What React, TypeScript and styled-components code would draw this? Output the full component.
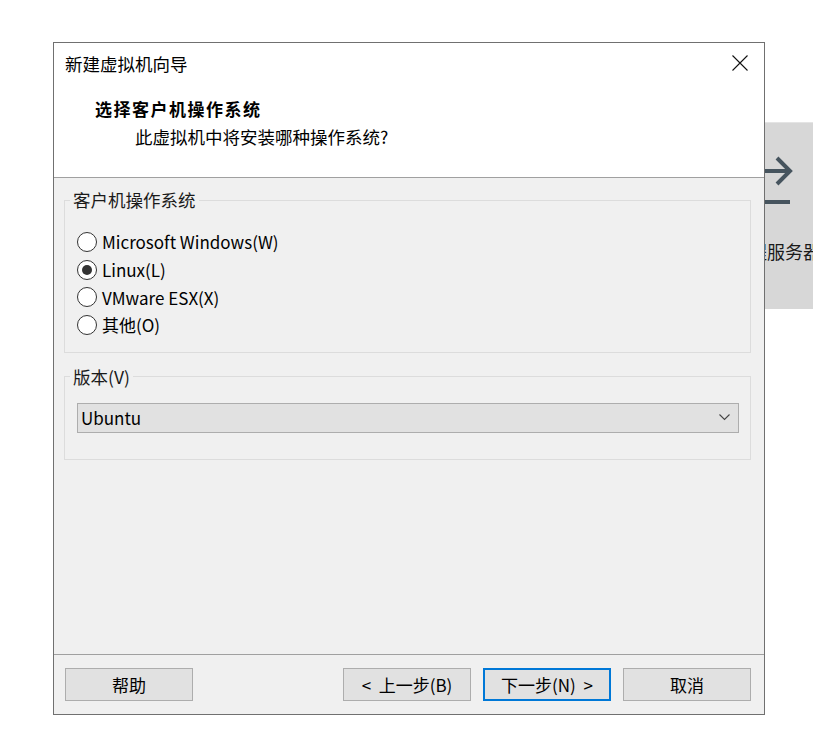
import React from 'react';
import styled, { createGlobalStyle } from 'styled-components';

const GlobalStyle = createGlobalStyle`
	html, body {
		margin: 0;
		padding: 0;
		background: #ffffff;
		overflow: hidden;
	}
	* {
		box-sizing: border-box;
	}
`;

const FONT = `"Noto Sans CJK SC", "Noto Sans", sans-serif`;

const Desktop = styled.div`
	position: relative;
	width: 813px;
	height: 730px;
	background: #ffffff;
	overflow: hidden;
	font-family: ${FONT};
	color: #000;
`;

/* window sitting behind the wizard */
const BackPanel = styled.div`
	position: absolute;
	left: 700px;
	top: 122px;
	width: 113px;
	height: 187px;
	background: #d7d7d7;
	border-top: 1px solid #e4e4e4;
	display: flex;
	flex-direction: column;
	align-items: flex-start;
	padding-left: 47px;
	overflow: hidden;
`;

const BackIcon = styled.svg`
	margin-top: 32px;
	flex-shrink: 0;
`;

const BackText = styled.div`
	margin-top: 32px;
	margin-left: 2px;
	font-size: 18px;
	line-height: 24px;
	white-space: nowrap;
	color: #1a1a1a;
`;

const Dialog = styled.div`
	position: absolute;
	left: 53px;
	top: 42px;
	width: 712px;
	height: 673px;
	border: 1px solid #707070;
	background: #f0f0f0;
	display: flex;
	flex-direction: column;
`;

const Header = styled.div`
	height: 135px;
	background: #ffffff;
	border-bottom: 1px solid #a0a0a0;
	display: flex;
	flex-direction: column;
`;

const TitleBar = styled.div`
	height: 42px;
	display: flex;
	align-items: center;
	justify-content: space-between;
	padding: 0 16px 2px 11px;
	font-size: 17.5px;
`;

const CloseButton = styled.svg`
	display: block;
`;

const Headline = styled.div`
	margin-top: 12px;
	padding-left: 41px;
	font-size: 17px;
	font-weight: 700;
	line-height: 24px;
	letter-spacing: 1.5px;
`;

const SubHeadline = styled.div`
	margin-top: 4px;
	padding-left: 81px;
	font-size: 17.5px;
	line-height: 24px;
`;

const Body = styled.div`
	flex: 1;
	padding: 0 13px 0 10px;
	display: flex;
	flex-direction: column;
`;

const GroupBox = styled.fieldset<{ $top: number; $pad: string }>`
	margin: ${p => p.$top}px 0 0 0;
	padding: ${p => p.$pad};
	border: 1px solid #dcdcdc;
	min-width: 0;
`;

const Legend = styled.legend`
	margin-left: -7px;
	padding: 0 3px;
	font-size: 17.5px;
	line-height: 22px;
	color: #1a1a1a;
`;

const RadioRow = styled.label`
	height: 27.7px;
	display: flex;
	align-items: center;
	gap: 5px;
	font-size: 17px;
`;

const RadioCircle = styled.span<{ $checked?: boolean }>`
	width: 20px;
	height: 20px;
	border-radius: 50%;
	border: 1px solid #333333;
	background: #ffffff;
	display: flex;
	align-items: center;
	justify-content: center;

	&::after {
		content: '';
		width: 10px;
		height: 10px;
		border-radius: 50%;
		background: ${p => (p.$checked ? '#333333' : 'transparent')};
	}
`;

const Select = styled.div`
	height: 30px;
	background: #e1e1e1;
	border: 1px solid #adadad;
	display: flex;
	align-items: center;
	justify-content: space-between;
	padding: 0 8px 0 3px;
	font-size: 17px;
`;

const Footer = styled.div`
	height: 60px;
	border-top: 1px solid #a0a0a0;
	display: flex;
	align-items: flex-start;
	padding: 13px 13px 0 11px;
`;

const Spacer = styled.div`
	flex: 1;
`;

const Button = styled.div<{ $primary?: boolean; $gap?: number }>`
	width: 128px;
	height: 33px;
	margin-left: ${p => p.$gap ?? 0}px;
	background: #e1e1e1;
	border: ${p => (p.$primary ? '2px solid #0078d7' : '1px solid #adadad')};
	display: flex;
	align-items: center;
	justify-content: center;
	font-size: 17px;
	white-space: pre;
`;

const options = [
	{ label: 'Microsoft Windows(W)', checked: false },
	{ label: 'Linux(L)', checked: true },
	{ label: 'VMware ESX(X)', checked: false },
	{ label: '其他(O)', checked: false },
];

const App: React.FC = () => {
	return (
		<Desktop>
			<GlobalStyle />
			<BackPanel>
				<BackIcon width="48" height="52" viewBox="0 0 48 52">
					<path d="M0 16 H42" stroke="#46545e" strokeWidth="4" fill="none" />
					<path d="M30 3 L43 16 L30 29" stroke="#46545e" strokeWidth="4" fill="none" />
					<path d="M0 47 H43" stroke="#46545e" strokeWidth="4" fill="none" />
				</BackIcon>
				<BackText>程服务器</BackText>
			</BackPanel>

			<Dialog>
				<Header>
					<TitleBar>
						<span>新建虚拟机向导</span>
						<CloseButton width="16" height="16" viewBox="0 0 16 16">
							<path d="M0.5 0.5 L15.5 15.5 M15.5 0.5 L0.5 15.5" stroke="#111" strokeWidth="1.1" />
						</CloseButton>
					</TitleBar>
					<Headline>选择客户机操作系统</Headline>
					<SubHeadline>此虚拟机中将安装哪种操作系统?</SubHeadline>
				</Header>

				<Body>
					<GroupBox $top={11} $pad="17px 10px 13px 12px">
						<Legend>客户机操作系统</Legend>
						{options.map(o => (
							<RadioRow key={o.label}>
								<RadioCircle $checked={o.checked} />
								<span>{o.label}</span>
							</RadioRow>
						))}
					</GroupBox>

					<GroupBox $top={13} $pad="15px 11px 26px 12px">
						<Legend>版本(V)</Legend>
						<Select>
							<span>Ubuntu</span>
							<svg width="11" height="7" viewBox="0 0 11 7">
								<path d="M0.5 0.5 L5.5 5.5 L10.5 0.5" stroke="#444" strokeWidth="1.1" fill="none" />
							</svg>
						</Select>
					</GroupBox>
				</Body>

				<Footer>
					<Button>帮助</Button>
					<Spacer />
					<Button>{'<  上一步(B)'}</Button>
					<Button $primary $gap={12}>{'下一步(N)  >'}</Button>
					<Button $gap={12}>取消</Button>
				</Footer>
			</Dialog>
		</Desktop>
	);
};

export default App;
